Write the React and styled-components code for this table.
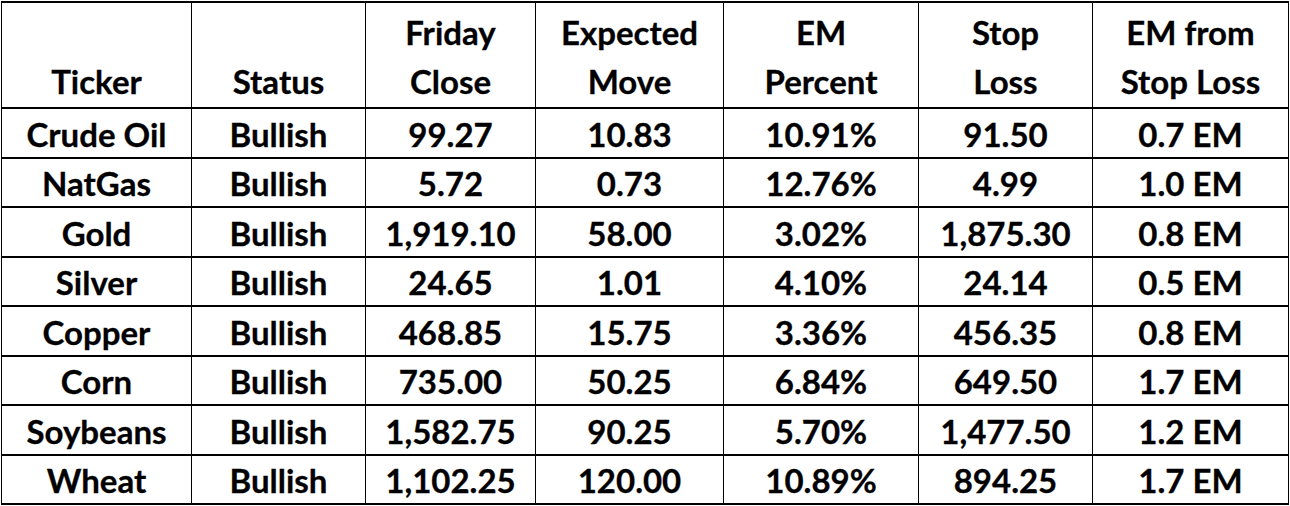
import styled, { createGlobalStyle } from 'styled-components';

const GlobalStyle = createGlobalStyle`
	html,
	body {
		margin: 0;
		padding: 0;
		background: #ffffff;
	}
`;

// Styles Start
const Sheet = styled.div`
	display: grid;
	grid-template-columns: 190px 174px 170px 188px 195px 174px 196px;
	grid-template-rows: 106px repeat(8, 49.5px);
	width: max-content;
	margin: 1px 0 0 1px;
	border-top: 2px solid #000;
	border-left: 1px solid #000;
	font-family: Lato, 'Liberation Sans', sans-serif;
	font-weight: 700;
	font-size: 33px;
	color: #000;
	-webkit-text-stroke: 0.3px #000;
`;
const Cell = styled.div`
	box-sizing: border-box;
	border-right: 1px solid #000;
	border-bottom: 2px solid #000;
	display: flex;
	align-items: flex-end;
	justify-content: center;
	text-align: center;
	padding-bottom: ${({ $head }) => ($head ? '1px' : '5px')};
	line-height: ${({ $head }) => ($head ? '49px' : '36px')};
	white-space: ${({ $head }) => ($head ? 'pre-line' : 'nowrap')};
`;
// Styles End

const headers = [
	'Ticker',
	'Status',
	'Friday\nClose',
	'Expected\nMove',
	'EM\nPercent',
	'Stop\nLoss',
	'EM from\nStop Loss',
];

const rows = [
	['Crude Oil', 'Bullish', '99.27', '10.83', '10.91%', '91.50', '0.7 EM'],
	['NatGas', 'Bullish', '5.72', '0.73', '12.76%', '4.99', '1.0 EM'],
	['Gold', 'Bullish', '1,919.10', '58.00', '3.02%', '1,875.30', '0.8 EM'],
	['Silver', 'Bullish', '24.65', '1.01', '4.10%', '24.14', '0.5 EM'],
	['Copper', 'Bullish', '468.85', '15.75', '3.36%', '456.35', '0.8 EM'],
	['Corn', 'Bullish', '735.00', '50.25', '6.84%', '649.50', '1.7 EM'],
	['Soybeans', 'Bullish', '1,582.75', '90.25', '5.70%', '1,477.50', '1.2 EM'],
	['Wheat', 'Bullish', '1,102.25', '120.00', '10.89%', '894.25', '1.7 EM'],
];

const App = () => (
	<>
		<GlobalStyle />
		<Sheet>
			{headers.map((h) => (
				<Cell key={h} $head>
					{h}
				</Cell>
			))}
			{rows.map((row) =>
				row.map((value, i) => <Cell key={row[0] + i}>{value}</Cell>)
			)}
		</Sheet>
	</>
);

export default App;
